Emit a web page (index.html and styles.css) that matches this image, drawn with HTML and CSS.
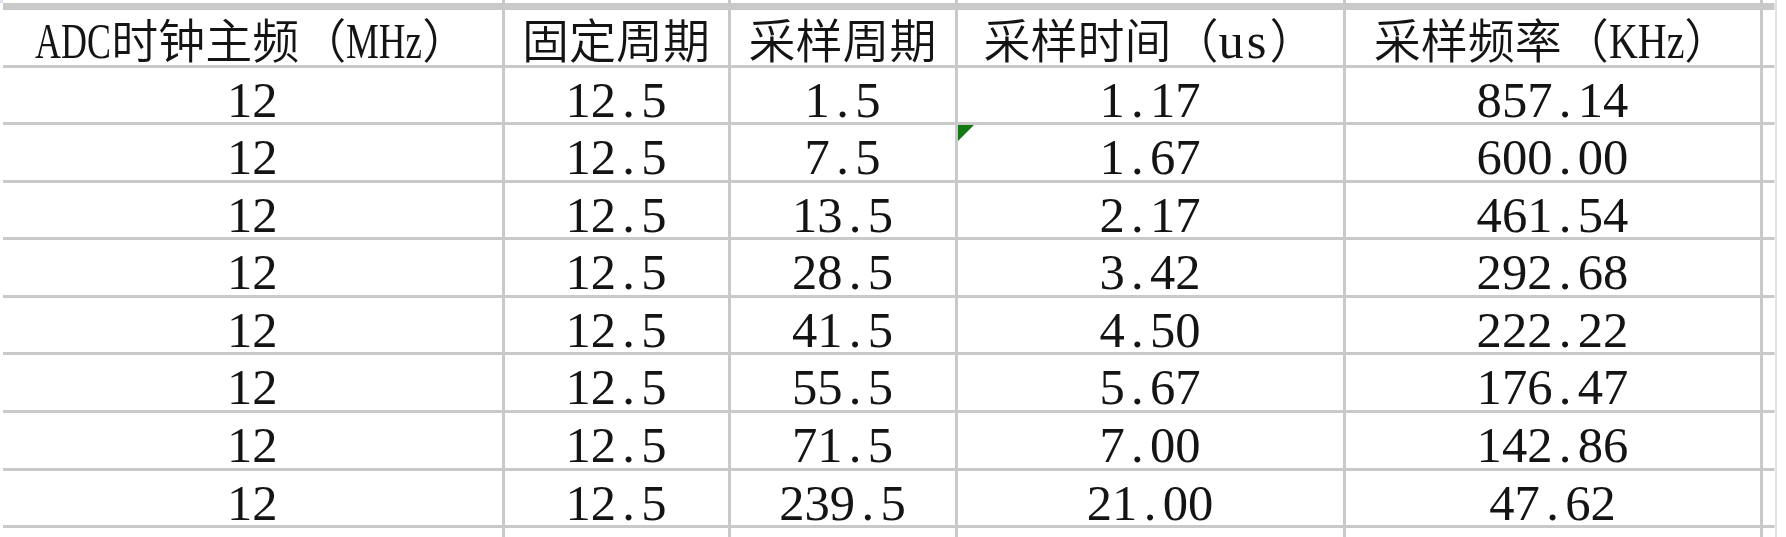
FILE: index.html
```html
<!DOCTYPE html>
<html lang="zh-CN">
<head>
<meta charset="utf-8">
<title>ADC采样频率</title>
<link rel="stylesheet" href="styles.css">
</head>
<body>
<div class="sheet">
  <div class="sp"></div><div class="sp"></div><div class="sp"></div><div class="sp"></div><div class="sp"></div><div class="sp"></div>

  <div class="hd"><span class="l adc">ADC</span>时钟主频（<span class="l mhz">MHz</span>）</div>
  <div class="hd">固定周期</div>
  <div class="hd">采样周期</div>
  <div class="hd">采样时间（<span class="l us">us</span>）</div>
  <div class="hd">采样频率（<span class="l khz">KHz</span>）</div>
  <div class="c"></div>

  <div class="c"><span class="n">12</span></div><div class="c"><span class="n">12<span class="p">.</span>5</span></div><div class="c"><span class="n">1<span class="p">.</span>5</span></div><div class="c"><span class="n">1<span class="p">.</span>17</span></div><div class="c"><span class="n">857<span class="p">.</span>14</span></div><div class="c"></div>
  <div class="c"><span class="n">12</span></div><div class="c"><span class="n">12<span class="p">.</span>5</span></div><div class="c"><span class="n">7<span class="p">.</span>5</span></div><div class="c flag"><span class="n">1<span class="p">.</span>67</span></div><div class="c"><span class="n">600<span class="p">.</span>00</span></div><div class="c"></div>
  <div class="c"><span class="n">12</span></div><div class="c"><span class="n">12<span class="p">.</span>5</span></div><div class="c"><span class="n">13<span class="p">.</span>5</span></div><div class="c"><span class="n">2<span class="p">.</span>17</span></div><div class="c"><span class="n">461<span class="p">.</span>54</span></div><div class="c"></div>
  <div class="c"><span class="n">12</span></div><div class="c"><span class="n">12<span class="p">.</span>5</span></div><div class="c"><span class="n">28<span class="p">.</span>5</span></div><div class="c"><span class="n">3<span class="p">.</span>42</span></div><div class="c"><span class="n">292<span class="p">.</span>68</span></div><div class="c"></div>
  <div class="c"><span class="n">12</span></div><div class="c"><span class="n">12<span class="p">.</span>5</span></div><div class="c"><span class="n">41<span class="p">.</span>5</span></div><div class="c"><span class="n">4<span class="p">.</span>50</span></div><div class="c"><span class="n">222<span class="p">.</span>22</span></div><div class="c"></div>
  <div class="c"><span class="n">12</span></div><div class="c"><span class="n">12<span class="p">.</span>5</span></div><div class="c"><span class="n">55<span class="p">.</span>5</span></div><div class="c"><span class="n">5<span class="p">.</span>67</span></div><div class="c"><span class="n">176<span class="p">.</span>47</span></div><div class="c"></div>
  <div class="c"><span class="n">12</span></div><div class="c"><span class="n">12<span class="p">.</span>5</span></div><div class="c"><span class="n">71<span class="p">.</span>5</span></div><div class="c"><span class="n">7<span class="p">.</span>00</span></div><div class="c"><span class="n">142<span class="p">.</span>86</span></div><div class="c"></div>
  <div class="c"><span class="n">12</span></div><div class="c"><span class="n">12<span class="p">.</span>5</span></div><div class="c"><span class="n">239<span class="p">.</span>5</span></div><div class="c"><span class="n">21<span class="p">.</span>00</span></div><div class="c"><span class="n">47<span class="p">.</span>62</span></div><div class="c"></div>

  <div class="sp"></div><div class="sp"></div><div class="sp"></div><div class="sp"></div><div class="sp"></div><div class="sp"></div>
</div>
</body>
</html>
```

FILE: styles.css
```css
html, body {
  margin: 0;
  padding: 0;
}
body {
  width: 1786px;
  height: 537px;
  overflow: hidden;
  background: #ffffff linear-gradient(#dbe6f1, #dbe6f1) no-repeat 0 0 / 1290px 3px;
}
.sheet {
  margin-left: 3px;
  width: 1771px;
  height: 537px;
  display: grid;
  grid-template-columns: 498.5px 223px 224px 385px 414px 12px;
  grid-template-rows: 6.5px 55px repeat(8, 54.6px) 1fr;
  gap: 3px;
  background: #c9c9c9;
  border-right: 3px solid #e2e2e2;
  color: #141414;
  filter: blur(0.45px);
}
.sheet > div {
  background: #ffffff;
  min-width: 0;
}
.sheet > .sp:nth-child(-n+6) {
  background: transparent;
  box-shadow: inset 0 3px 0 #ffffff;
}
.hd {
  font-family: "Noto Sans CJK SC", "Noto Sans CJK JP", sans-serif;
  font-weight: 350;
  font-size: 47px;
  line-height: 47px;
  padding-top: 4px;
  text-align: center;
  white-space: nowrap;
}
.l {
  display: inline-block;
  font-family: "Liberation Serif", "DejaVu Serif", serif;
  font-weight: 400;
  font-size: 50.6px;
  line-height: 47px;
  transform-origin: left center;
}
.adc { transform: scaleX(0.71); margin-right: -0.612em; }
.mhz { transform: scaleX(0.73); margin-right: -0.555em; }
.khz { transform: scaleX(0.79); margin-right: -0.396em; }
.us { letter-spacing: 0.06em; }
.c {
  display: flex;
  justify-content: center;
  align-items: flex-start;
  padding-top: 5px;
  box-sizing: border-box;
}
.n {
  display: inline-block;
  font-family: "Liberation Serif", "DejaVu Serif", serif;
  font-size: 50.6px;
  line-height: 54px;
  white-space: nowrap;
}
.p {
  margin: 0 0.125em;
}
.flag {
  position: relative;
}
.flag::before {
  content: "";
  position: absolute;
  left: 0;
  top: 0;
  width: 0;
  height: 0;
  border-top: 16px solid #137a13;
  border-right: 16px solid transparent;
}
```
